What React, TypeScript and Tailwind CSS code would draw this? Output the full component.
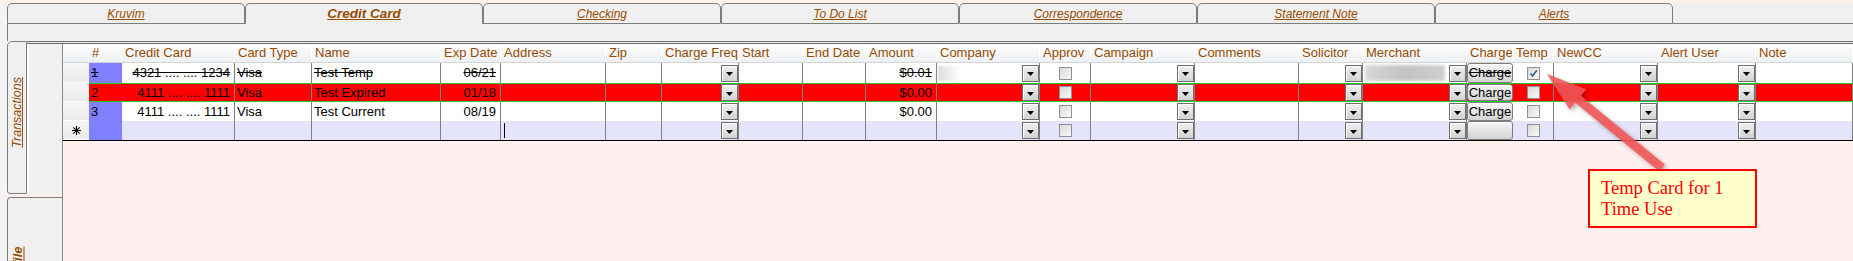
import React from 'react';

type Kind = 'num' | 'text' | 'right' | 'drop' | 'check' | 'button';
type Col = { key: string; h: string; w: string; kind: Kind };

const cols: Col[] = [
  { key: 'num', h: '#', w: 'w-[33px]', kind: 'num' },
  { key: 'cc', h: 'Credit Card', w: 'w-[113px]', kind: 'right' },
  { key: 'type', h: 'Card Type', w: 'w-[77px]', kind: 'text' },
  { key: 'name', h: 'Name', w: 'w-[129px]', kind: 'text' },
  { key: 'exp', h: 'Exp Date', w: 'w-[60px]', kind: 'right' },
  { key: 'address', h: 'Address', w: 'w-[105px]', kind: 'text' },
  { key: 'zip', h: 'Zip', w: 'w-[56px]', kind: 'text' },
  { key: 'freq', h: 'Charge Freq', w: 'w-[77px]', kind: 'drop' },
  { key: 'start', h: 'Start', w: 'w-[64px]', kind: 'text' },
  { key: 'end', h: 'End Date', w: 'w-[63px]', kind: 'text' },
  { key: 'amount', h: 'Amount', w: 'w-[71px]', kind: 'right' },
  { key: 'company', h: 'Company', w: 'w-[103px]', kind: 'drop' },
  { key: 'approv', h: 'Approv', w: 'w-[51px]', kind: 'check' },
  { key: 'campaign', h: 'Campaign', w: 'w-[104px]', kind: 'drop' },
  { key: 'comments', h: 'Comments', w: 'w-[104px]', kind: 'text' },
  { key: 'solicitor', h: 'Solicitor', w: 'w-[64px]', kind: 'drop' },
  { key: 'merchant', h: 'Merchant', w: 'w-[104px]', kind: 'drop' },
  { key: 'charge', h: 'Charge', w: 'w-[46px]', kind: 'button' },
  { key: 'temp', h: 'Temp', w: 'w-[41px]', kind: 'check' },
  { key: 'newcc', h: 'NewCC', w: 'w-[104px]', kind: 'drop' },
  { key: 'alert', h: 'Alert User', w: 'w-[98px]', kind: 'drop' },
  { key: 'note', h: 'Note', w: 'flex-1', kind: 'text' },
];

type Row = {
  vals: Record<string, string>;
  h: string;
  bg: string;
  struck?: boolean;
  current?: boolean;
  newRow?: boolean;
  temp?: boolean;
  blurred?: boolean;
};

const rows: Row[] = [
  {
    vals: { num: '1', cc: '4321 .... .... 1234', type: 'Visa', name: 'Test Temp', exp: '06/21', amount: '$0.01', charge: 'Charge' },
    h: 'h-[20px]',
    bg: 'bg-white',
    struck: true,
    temp: true,
    blurred: true,
  },
  {
    vals: { num: '2', cc: '4111 .... .... 1111', type: 'Visa', name: 'Test Expired', exp: '01/18', amount: '$0.00', charge: 'Charge' },
    h: 'h-[19px]',
    bg: 'bg-[#ff0000]',
    current: true,
  },
  {
    vals: { num: '3', cc: '4111 .... .... 1111', type: 'Visa', name: 'Test Current', exp: '08/19', amount: '$0.00', charge: 'Charge' },
    h: 'h-[19px]',
    bg: 'bg-white',
  },
  {
    vals: { charge: '' },
    h: 'h-[19px]',
    bg: 'bg-[#e4e4fb]',
    newRow: true,
  },
];

const tabs = ['Kruvim', 'Credit Card', 'Checking', 'To Do List', 'Correspondence', 'Statement Note', 'Alerts'];

const DropBtn = () => (
  <div className="w-[17px] h-[17px] shrink-0 border border-[#6f6f6f] bg-linear-to-b from-[#f0f0f0] to-[#d2d2d2] shadow-[inset_1px_1px_0_#ffffff] flex items-center justify-center pt-[2px]">
    <svg width="7" height="4" viewBox="0 0 7 4">
      <path d="M0 0h7L3.5 4z" fill="#000" />
    </svg>
  </div>
);

const CheckBox = ({ checked }: { checked?: boolean }) => (
  <div className="w-[13px] h-[13px] border border-[#8e8f8f] bg-linear-to-br from-[#d8d8d8] to-[#fafafa] flex items-center justify-center">
    {checked && (
      <svg width="11" height="11" viewBox="0 0 11 11">
        <path d="M2.5 5.5 L4.6 8 L8.8 2.2" stroke="#3b5998" strokeWidth="1.6" fill="none" />
      </svg>
    )}
  </div>
);

const Star = () => (
  <svg width="9" height="9" viewBox="0 0 9 9">
    <path d="M4.5 0v9M0 4.5h9M1.3 1.3l6.4 6.4M7.7 1.3l-6.4 6.4" stroke="#000" strokeWidth="1.1" />
  </svg>
);

const Cell = ({ col, row }: { col: Col; row: Row }) => {
  const v = row.vals[col.key] ?? '';
  const strike = row.struck ? 'line-through' : '';

  if (col.kind === 'num') {
    const bg = row.current ? 'bg-[#ff0000]' : 'bg-[#8080ff]';
    return (
      <div className={`${col.w} shrink-0 h-full flex items-center pl-[2px] ${bg} ${strike}`}>{v}</div>
    );
  }
  if (col.kind === 'button') {
    return (
      <div className={`${col.w} shrink-0 h-full`}>
        <div className="w-full h-full rounded-[3px] border border-[#7c7c7c] bg-linear-to-b from-[#f6f6f6] to-[#d3d3d3] shadow-[inset_0_1px_0_#ffffff] flex items-center justify-center">
          <span className={strike}>{v}</span>
        </div>
      </div>
    );
  }
  if (col.kind === 'check') {
    return (
      <div className={`${col.w} shrink-0 h-full flex items-center justify-center border-r border-[#808080]`}>
        <CheckBox checked={col.key === 'temp' && row.temp} />
      </div>
    );
  }
  if (col.kind === 'drop') {
    return (
      <div className={`${col.w} shrink-0 h-full flex items-center justify-between border-r border-[#808080]`}>
        {row.blurred && col.key === 'company' ? (
          <div className="w-[22px] h-[15px] ml-px bg-linear-to-r from-[#dcdcdc] to-white blur-[1px]" />
        ) : row.blurred && col.key === 'merchant' ? (
          <div className="w-[80px] h-[16px] ml-[2px] bg-linear-to-r from-[#d8d8d8] via-[#c2c2c2] to-[#d0d0d0] blur-[1.5px]" />
        ) : (
          <span />
        )}
        <DropBtn />
      </div>
    );
  }
  if (col.kind === 'right') {
    return (
      <div className={`${col.w} shrink-0 h-full flex items-center justify-end pr-[4px] whitespace-pre border-r border-[#808080] ${strike}`}>
        {v}
      </div>
    );
  }
  return (
    <div className={`${col.w} shrink-0 h-full flex items-center pl-[2px] whitespace-nowrap overflow-hidden border-r border-[#808080] ${strike}`}>
      {row.newRow && col.key === 'address' ? <div className="w-px h-[15px] bg-black ml-px" /> : v}
    </div>
  );
};

export default function App() {
  return (
    <div className="relative w-[1853px] h-[261px] overflow-hidden bg-[#fff0f0] flex flex-col font-['Liberation_Sans',Arial,sans-serif] text-[13px] text-black">
      <div className="h-[3px] shrink-0" />

      {/* form tabs */}
      <div className="flex h-[21px] shrink-0">
        <div className="w-[7px] bg-[#f4f4f4]" />
        {tabs.map((t) =>
          t === 'Credit Card' ? (
            <div
              key={t}
              className="w-[238px] shrink-0 h-full rounded-t-[5px] border border-b-0 border-[#7d7d7d] bg-[#f0f0f0] flex items-center justify-center pt-px"
            >
              <span className="text-[13.5px] font-bold italic underline text-[#964b00]">{t}</span>
            </div>
          ) : (
            <div
              key={t}
              className="w-[238px] shrink-0 h-full rounded-t-[5px] border border-[#7d7d7d] bg-[#f0f0f0] flex items-center justify-center"
            >
              <span className="text-[12px] italic underline text-[#964b00]">{t}</span>
            </div>
          )
        )}
        <div className="flex-1 border-b border-[#7d7d7d] bg-[#f0f0f0]" />
      </div>

      <div className="flex h-[17px] shrink-0">
        <div className="w-[7px] bg-[#f4f4f4]" />
        <div className="flex-1 bg-[#f0f0f0] border-l border-[#7d7d7d]" />
      </div>

      <div className="flex flex-1 min-h-0">
        <div className="w-[7px] bg-[#f4f4f4]" />

        {/* side tabs */}
        <div className="w-[55px] shrink-0 flex flex-col">
          <div className="flex h-[153px] shrink-0">
            <div className="w-[20px] shrink-0 rounded-tl-[5px] rounded-bl-[3px] border border-[#7d7d7d] bg-[#f0f0f0] flex items-center justify-center pb-[10px]">
              <span className="-rotate-90 whitespace-nowrap text-[12.5px] italic underline text-[#964b00]">Transactions</span>
            </div>
            <div className="flex-1 flex flex-col">
              <div className="h-[3px] border-t border-b border-[#6e6e6e] bg-[#e8e8e8]" />
              <div className="flex-1 bg-[#f0f0f0] border-l-2 border-white" />
            </div>
          </div>
          <div className="flex-1 mt-[3px] rounded-tl-[4px] border-l border-t border-[#7d7d7d] bg-[#f0f0f0]">
            <div className="w-[20px] h-[41px] mt-[48px] flex items-center justify-center">
              <span className="-rotate-90 whitespace-nowrap text-[13px] font-bold italic underline text-[#964b00]">Profile</span>
            </div>
          </div>
        </div>

        {/* datasheet */}
        <div className="flex-1 flex flex-col">
          <div className="h-[3px] shrink-0 border-t border-b border-[#6e6e6e] bg-[#e8e8e8]" />
          <div className="flex-1 border-l border-[#8a8a8a]">
            <div className="border-b border-black">
              <div className="flex h-[19px] border-b border-[#d5d5d5]">
                <div className="w-[26px] shrink-0 bg-linear-to-b from-[#fbfcfd] to-[#eef1f4] border-r border-white" />
                {cols.map((c) => (
                  <div
                    key={c.key}
                    className={`${c.w} shrink-0 h-full flex items-center pl-[3px] whitespace-nowrap overflow-hidden bg-linear-to-b from-[#fbfcfd] to-[#eef1f4] border-r border-white text-[#964b00]`}
                  >
                    {c.h}
                  </div>
                ))}
              </div>

              {rows.map((r, i) => (
                <div key={i} className={`flex ${r.h}`}>
                  <div className="w-[26px] shrink-0 h-full bg-linear-to-b from-[#f6f6f6] to-[#ebebeb] border-b border-white flex items-center justify-center">
                    {r.newRow && <Star />}
                  </div>
                  <div className={`flex-1 flex h-full ${r.bg} ${r.current ? 'border-y border-[#22cc22]' : ''}`}>
                    {cols.map((c) => (
                      <Cell key={c.key} col={c} row={r} />
                    ))}
                  </div>
                </div>
              ))}
            </div>
          </div>
        </div>
      </div>

      {/* callout arrow */}
      <svg className="absolute left-0 top-0 pointer-events-none" width="1853" height="261">
        <defs>
          <filter id="sh" x="-20%" y="-20%" width="140%" height="140%">
            <feDropShadow dx="2" dy="2" stdDeviation="2" floodColor="#000" floodOpacity="0.35" />
          </filter>
        </defs>
        <polygon
          points="1547,74 1569.7,109.4 1575.2,102.8 1659.2,171.5 1664.9,164.5 1580.8,95.8 1586.2,89.2"
          fill="#f05656"
          fillOpacity="0.88"
          filter="url(#sh)"
        />
      </svg>

      <div className="absolute left-[1588px] top-[169px] w-[169px] h-[59px] border-2 border-[#ff0000] bg-[#ffffcc] pl-[11px] pt-[7px] font-['Liberation_Serif',serif] text-[18.5px] leading-[21px] text-[#ff0000]">
        Temp Card for 1
        <br />
        Time Use
      </div>
    </div>
  );
}
